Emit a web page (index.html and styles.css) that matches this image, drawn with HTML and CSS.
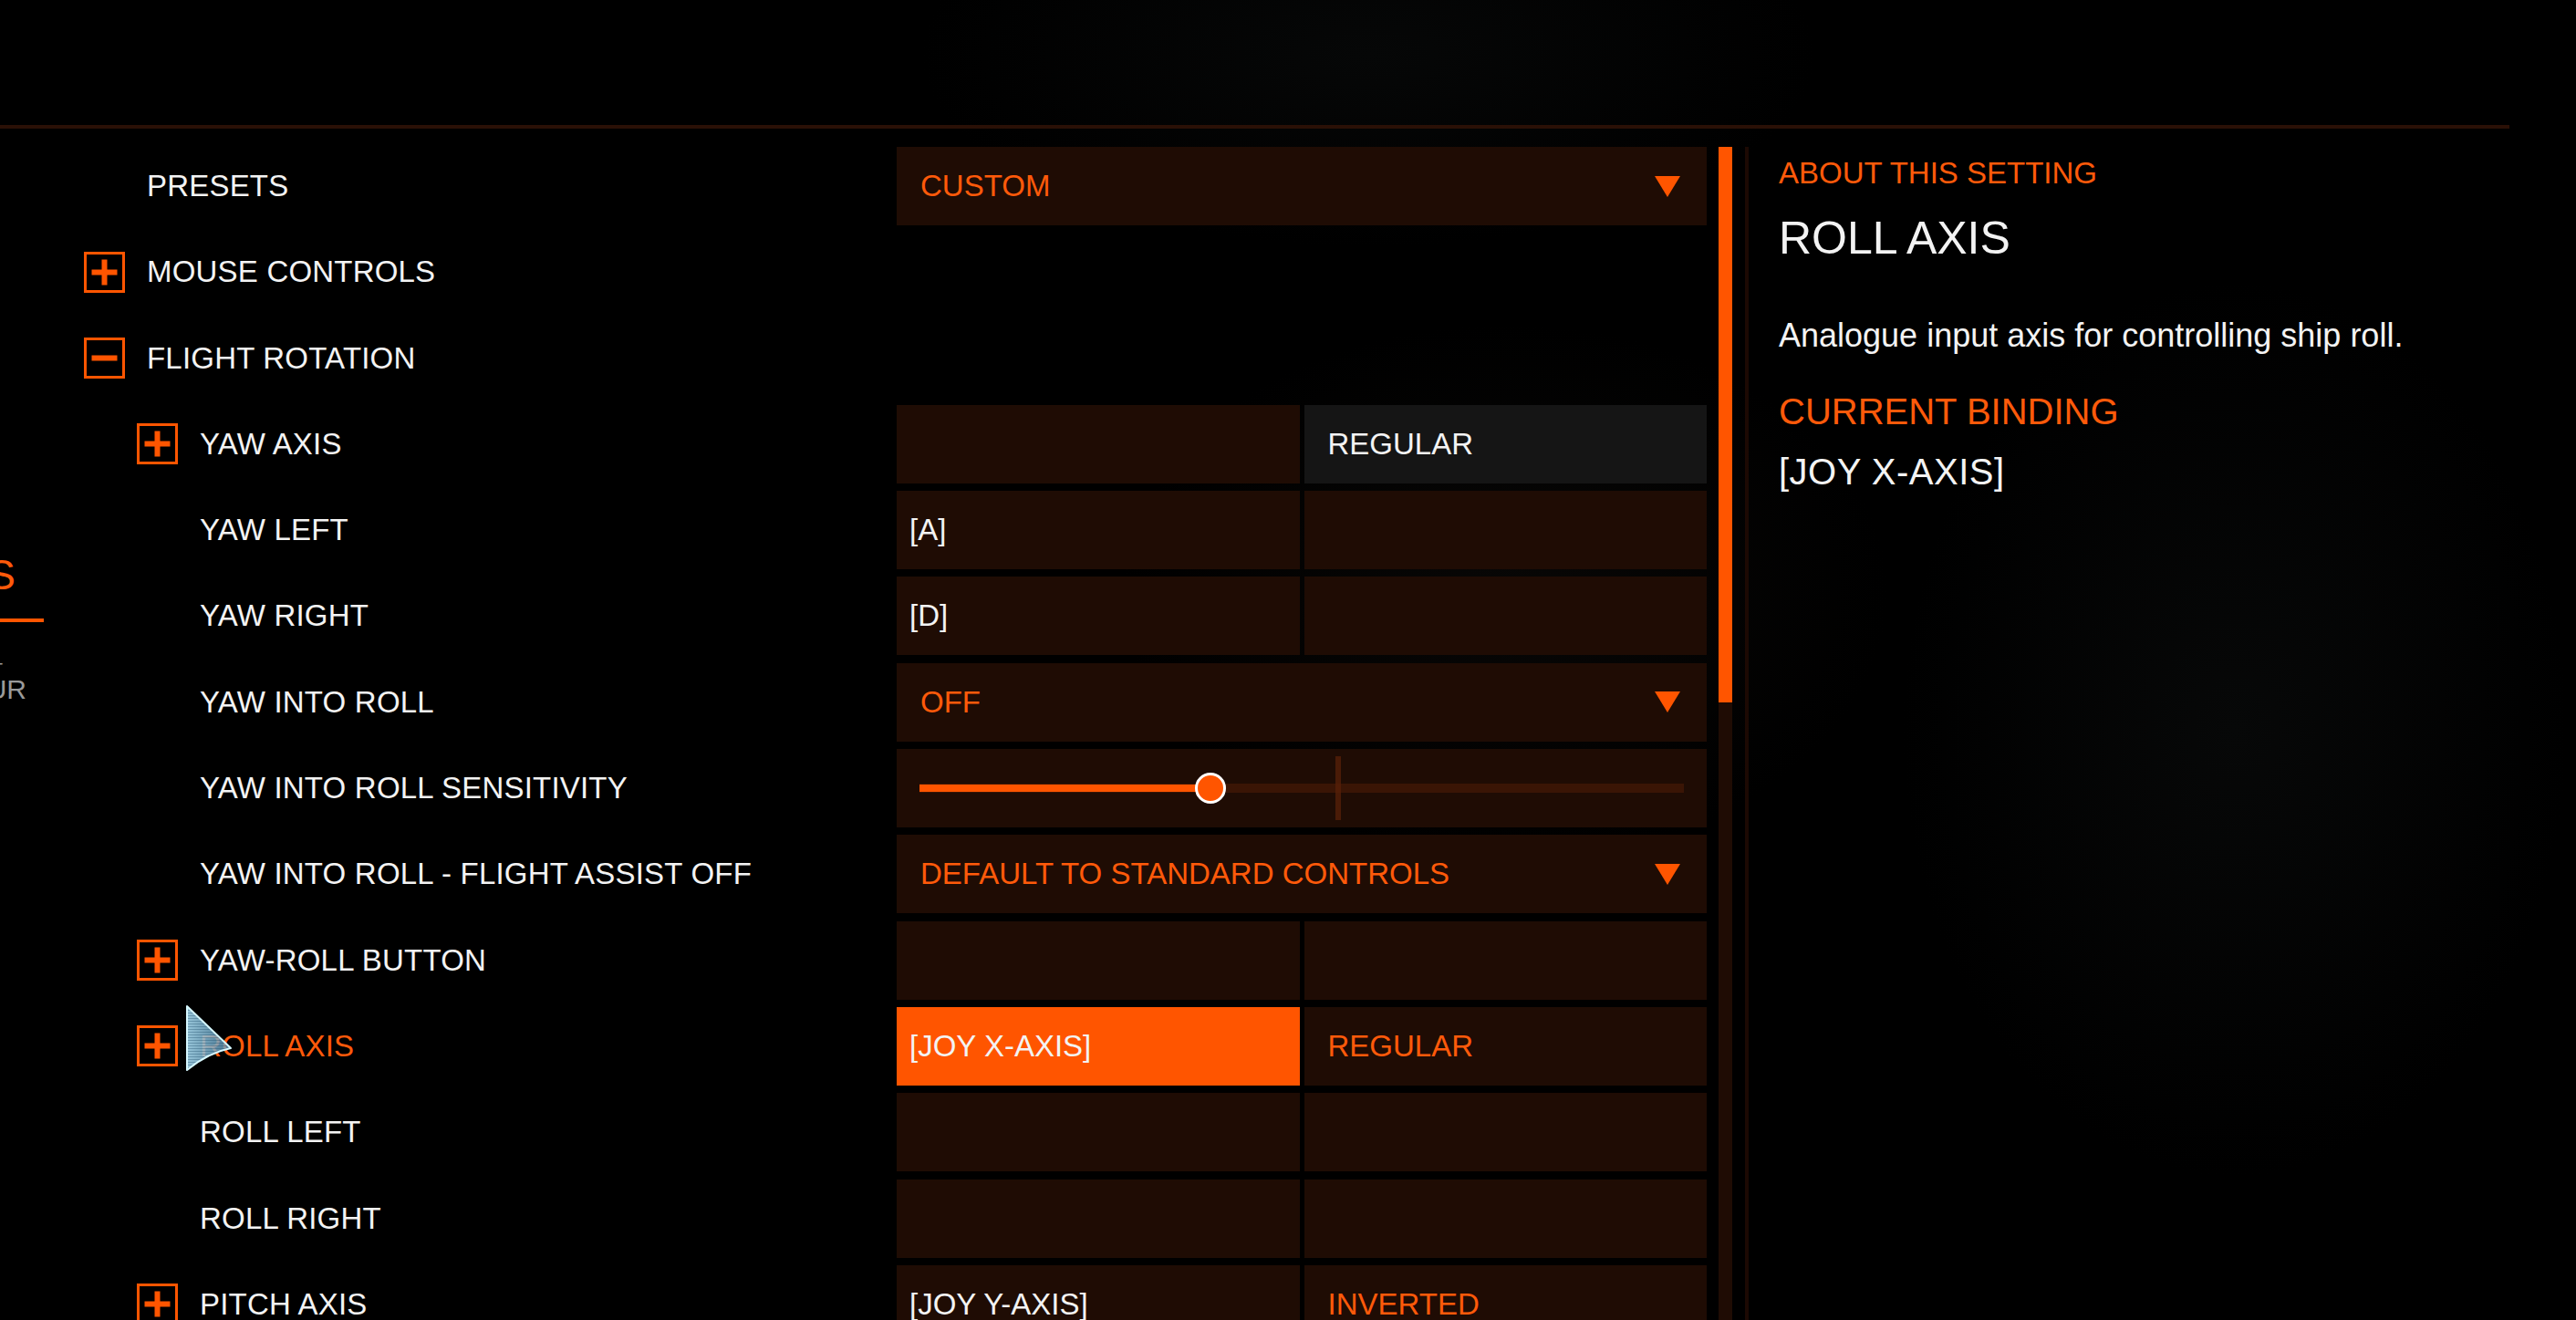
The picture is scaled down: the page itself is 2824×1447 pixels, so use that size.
FILE: index.html
```html
<!DOCTYPE html>
<html lang="en">
<head>
    <meta charset="UTF-8">
    <title>Options - Controls</title>
    <link rel="stylesheet" href="styles.css">
</head>
<body>
    <div class="screen">
        <div class="top-space"></div>

        <main class="panel">
            <aside class="side">
                <div class="side-title">CONTROLS</div>
                <div class="side-item side-item-a">SHIP LAYOUT</div>
                <div class="side-item side-item-b">SHIP BEHAVIOUR</div>
            </aside>

            <section class="list">
                <div class="row">
                    <div class="label lvl1">PRESETS</div>
                    <div class="value dropdown"><span>CUSTOM</span><svg class="arrow" viewBox="0 0 28 23"><polygon points="0,0 28,0 14,23"/></svg></div>
                </div>

                <div class="row">
                    <div class="label lvl1 has-toggle">
                        <svg class="toggle" viewBox="0 0 45 45"><rect x="1.5" y="1.5" width="42" height="42"/><path d="M8.5 22.5h28M22.5 8.5v28"/></svg>
                        MOUSE CONTROLS
                    </div>
                </div>

                <div class="row">
                    <div class="label lvl1 has-toggle">
                        <svg class="toggle" viewBox="0 0 45 45"><rect x="1.5" y="1.5" width="42" height="42"/><path d="M8.5 22.5h28"/></svg>
                        FLIGHT ROTATION
                    </div>
                </div>

                <div class="row">
                    <div class="label lvl2 has-toggle">
                        <svg class="toggle" viewBox="0 0 45 45"><rect x="1.5" y="1.5" width="42" height="42"/><path d="M8.5 22.5h28M22.5 8.5v28"/></svg>
                        YAW AXIS
                    </div>
                    <div class="value pair">
                        <div class="cell"></div>
                        <div class="cell cell-grey">REGULAR</div>
                    </div>
                </div>

                <div class="row">
                    <div class="label lvl2">YAW LEFT</div>
                    <div class="value pair">
                        <div class="cell">[A]</div>
                        <div class="cell"></div>
                    </div>
                </div>

                <div class="row">
                    <div class="label lvl2">YAW RIGHT</div>
                    <div class="value pair">
                        <div class="cell">[D]</div>
                        <div class="cell"></div>
                    </div>
                </div>

                <div class="row">
                    <div class="label lvl2">YAW INTO ROLL</div>
                    <div class="value dropdown"><span>OFF</span><svg class="arrow" viewBox="0 0 28 23"><polygon points="0,0 28,0 14,23"/></svg></div>
                </div>

                <div class="row">
                    <div class="label lvl2">YAW INTO ROLL SENSITIVITY</div>
                    <div class="value slider">
                        <div class="track">
                            <div class="fill" style="width: 38.1%"></div>
                            <div class="tick" style="left: 54.4%"></div>
                            <div class="knob" style="left: 38.1%"></div>
                        </div>
                    </div>
                </div>

                <div class="row">
                    <div class="label lvl2">YAW INTO ROLL - FLIGHT ASSIST OFF</div>
                    <div class="value dropdown"><span>DEFAULT TO STANDARD CONTROLS</span><svg class="arrow" viewBox="0 0 28 23"><polygon points="0,0 28,0 14,23"/></svg></div>
                </div>

                <div class="row">
                    <div class="label lvl2 has-toggle">
                        <svg class="toggle" viewBox="0 0 45 45"><rect x="1.5" y="1.5" width="42" height="42"/><path d="M8.5 22.5h28M22.5 8.5v28"/></svg>
                        YAW-ROLL BUTTON
                    </div>
                    <div class="value pair">
                        <div class="cell"></div>
                        <div class="cell"></div>
                    </div>
                </div>

                <div class="row">
                    <div class="label lvl2 has-toggle selected">
                        <svg class="toggle" viewBox="0 0 45 45"><rect x="1.5" y="1.5" width="42" height="42"/><path d="M8.5 22.5h28M22.5 8.5v28"/></svg>
                        ROLL AXIS
                    </div>
                    <div class="value pair">
                        <div class="cell cell-active">[JOY X-AXIS]</div>
                        <div class="cell cell-orange">REGULAR</div>
                    </div>
                </div>

                <div class="row">
                    <div class="label lvl2">ROLL LEFT</div>
                    <div class="value pair">
                        <div class="cell"></div>
                        <div class="cell"></div>
                    </div>
                </div>

                <div class="row">
                    <div class="label lvl2">ROLL RIGHT</div>
                    <div class="value pair">
                        <div class="cell"></div>
                        <div class="cell"></div>
                    </div>
                </div>

                <div class="row">
                    <div class="label lvl2 has-toggle">
                        <svg class="toggle" viewBox="0 0 45 45"><rect x="1.5" y="1.5" width="42" height="42"/><path d="M8.5 22.5h28M22.5 8.5v28"/></svg>
                        PITCH AXIS
                    </div>
                    <div class="value pair">
                        <div class="cell">[JOY Y-AXIS]</div>
                        <div class="cell cell-orange">INVERTED</div>
                    </div>
                </div>
            </section>

            <div class="scroll"><div class="thumb"></div></div>
            <div class="rule"></div>

            <section class="about">
                <div class="about-head">ABOUT THIS SETTING</div>
                <div class="about-title">ROLL AXIS</div>
                <p class="about-text">Analogue input axis for controlling ship roll.</p>
                <div class="about-sub">CURRENT BINDING</div>
                <div class="about-bind">[JOY X-AXIS]</div>
            </section>
        </main>

        <!-- mouse pointer -->
        <svg class="cursor" viewBox="0 0 60 80">
            <defs>
                <linearGradient id="cur" x1="0" y1="0" x2="1" y2="0">
                    <stop offset="0" stop-color="#a9dcf2" stop-opacity="0.9"/>
                    <stop offset="1" stop-color="#5f9cc0" stop-opacity="0.75"/>
                </linearGradient>
                <pattern id="scan" width="4" height="3" patternUnits="userSpaceOnUse">
                    <rect width="4" height="1" fill="#1d4a66" fill-opacity="0.35"/>
                </pattern>
            </defs>
            <path d="M5 5 L53 51 Q 28 56 5 75 Z" fill="url(#cur)"/>
            <path d="M5 5 L53 51 Q 28 56 5 75 Z" fill="url(#scan)" stroke="#d6f8ff" stroke-width="2" stroke-linejoin="round"/>
        </svg>
    </div>
</body>
</html>
```

FILE: styles.css
```css
:root {
    --orange: #ff5500;
    --orange-text: #ff5a0a;
    --cell: #1f0c04;
    --cell-grey: #151515;
    --line: #2a1006;
    --white: #f3f3f3;
}
* {
    box-sizing: border-box;
    margin: 0;
    padding: 0;
}
body {
    width: 2824px;
    height: 1447px;
    overflow: hidden;
    background-color: #000;
    font-family: "Liberation Sans", Arial, sans-serif;
    color: var(--white);
}
.screen {
    position: relative;
    width: 2824px;
    height: 1447px;
    overflow: hidden;
    background:
        radial-gradient(ellipse 520px 700px at 2450px 800px, #070808, rgba(0,0,0,0) 70%),
        radial-gradient(ellipse 600px 420px at 1650px 650px, #080706, rgba(0,0,0,0) 70%),
        radial-gradient(ellipse 700px 300px at 1500px 60px, #060707, rgba(0,0,0,0) 70%),
        #000;
}
.top-space {
    height: 137px;
}

/* main panel under the divider */
.panel {
    display: flex;
    width: 2751px;
    height: 1310px;
    border-top: 4px solid var(--line);
}

/* left menu, mostly cut off */
.side {
    width: 48px;
    flex-shrink: 0;
    overflow: hidden;
    padding-top: 466px;
    white-space: nowrap;
    text-align: right;
}
.side-title {
    font-size: 46px;
    line-height: 1;
    color: var(--orange-text);
    padding-right: 31px;
    padding-bottom: 25px;
    border-bottom: 4px solid var(--orange);
    direction: rtl;
}
.side-item {
    color: #9a9a9a;
    direction: rtl;
    overflow: hidden;
}
.side-item-a {
    font-size: 18px;
    line-height: 20px;
    height: 20px;
    margin-top: 42px;
    padding-right: 45px;
}
.side-item-b {
    font-size: 30px;
    line-height: 24px;
    height: 24px;
    padding-right: 19px;
}

/* settings list */
.list {
    width: 1823px;
    flex-shrink: 0;
    padding-top: 20px;
}
.row {
    display: grid;
    grid-template-columns: 935px 888px;
    height: 86px;
    margin-bottom: 8.3px;
}
.label {
    display: flex;
    align-items: center;
    font-size: 33px;
    letter-spacing: 0.2px;
    white-space: nowrap;
}
.lvl1 { padding-left: 113px; }
.lvl2 { padding-left: 171px; }
.lvl1.has-toggle { padding-left: 44px; }
.lvl2.has-toggle { padding-left: 102px; }
.label.selected {
    color: var(--orange-text);
}
.toggle {
    width: 45px;
    height: 45px;
    margin-right: 24px;
    flex-shrink: 0;
}
.toggle rect {
    fill: none;
    stroke: var(--orange);
    stroke-width: 3;
}
.toggle path {
    fill: none;
    stroke: var(--orange);
    stroke-width: 6;
}

.value {
    font-size: 33px;
    white-space: nowrap;
}
.dropdown {
    display: flex;
    align-items: center;
    justify-content: space-between;
    background-color: var(--cell);
    color: var(--orange-text);
    padding: 0 29px 0 26px;
}
.arrow {
    width: 28px;
    height: 23px;
    fill: var(--orange);
}
.pair {
    display: grid;
    grid-template-columns: 1fr 1fr;
    gap: 5px;
}
.cell {
    display: flex;
    align-items: center;
    padding-left: 14px;
    background-color: var(--cell);
    color: var(--white);
}
.cell + .cell {
    padding-left: 26px;
}
.cell-grey {
    background-color: var(--cell-grey);
}
.cell-active {
    background-color: var(--orange);
}
.cell-orange {
    color: var(--orange-text);
}

/* slider */
.slider {
    display: flex;
    align-items: center;
    background-color: var(--cell);
    padding: 0 25px;
}
.track {
    position: relative;
    width: 100%;
    height: 10px;
    background-color: #3a1505;
}
.fill {
    height: 8px;
    margin-top: 1px;
    background-color: var(--orange);
}
.tick {
    position: absolute;
    top: -30px;
    width: 6px;
    height: 70px;
    background-color: rgba(90, 32, 8, 0.75);
}
.knob {
    position: absolute;
    top: -12px;
    width: 34px;
    height: 34px;
    margin-left: -17px;
    border-radius: 50%;
    background-color: var(--orange);
    border: 3px solid #fff;
}

/* scrollbar and rule */
.scroll {
    width: 15px;
    margin: 20px 0 0 13px;
    background-color: var(--cell);
    flex-shrink: 0;
}
.thumb {
    height: 609px;
    background-color: var(--orange);
}
.rule {
    width: 4px;
    margin: 20px 0 0 14px;
    background-color: #1c0903;
    flex-shrink: 0;
}

/* about panel */
.about {
    margin-left: 33px;
    padding-top: 32px;
    line-height: 1;
}
.about-head {
    font-size: 33px;
    color: var(--orange-text);
}
.about-title {
    font-size: 50px;
    margin-top: 30px;
}
.about-text {
    font-size: 36px;
    margin-top: 64px;
}
.about-sub {
    font-size: 40px;
    margin-top: 45px;
    color: var(--orange-text);
}
.about-bind {
    font-size: 40px;
    margin-top: 26px;
    letter-spacing: 0.5px;
}

/* pointer over the list */
.cursor {
    position: absolute;
    left: 200px;
    top: 1098px;
    width: 60px;
    height: 80px;
}
```
